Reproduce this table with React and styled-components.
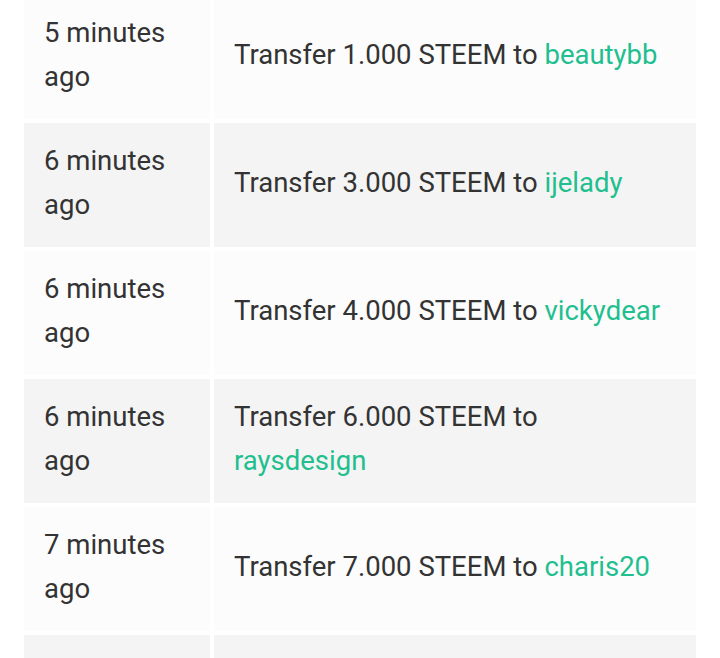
import React from 'react';
import styled, { createGlobalStyle } from 'styled-components';

const GlobalStyle = createGlobalStyle`
  html, body {
    margin: 0;
    padding: 0;
    background: #ffffff;
  }
  body {
    font-family: Roboto, "Liberation Sans", sans-serif;
    color: #333333;
  }
`;

const Page = styled.div`
  padding: 0 20px;
  margin-top: -9px;
  height: 667px;
  overflow: hidden;
`;

const Table = styled.table`
  width: 100%;
  border-collapse: separate;
  border-spacing: 4px;
  table-layout: fixed;
`;

const Row = styled.tr`
  background: ${p => (p.$odd ? '#f4f4f4' : '#fcfcfc')};
`;

const Cell = styled.td`
  height: 124px;
  box-sizing: border-box;
  padding: 16px 20px 20px;
  font-size: 27.5px;
  line-height: 44px;
  color: #333333;
  vertical-align: middle;
  width: ${p => (p.$time ? '186px' : 'auto')};
`;

const UserLink = styled.a`
  color: #1fbf8f;
  text-decoration: none;
`;

const transfers = [
  { when: '5 minutes ago', amount: '1.000', to: 'beautybb' },
  { when: '6 minutes ago', amount: '3.000', to: 'ijelady' },
  { when: '6 minutes ago', amount: '4.000', to: 'vickydear' },
  { when: '6 minutes ago', amount: '6.000', to: 'raysdesign' },
  { when: '7 minutes ago', amount: '7.000', to: 'charis20' },
  { when: '7 minutes ago', amount: '2.000', to: 'steemit' },
];

export default function App() {
  return (
    <>
      <GlobalStyle />
      <Page>
        <Table>
          <tbody>
            {transfers.map((t, i) => (
              <Row key={i} $odd={i % 2 === 1}>
                <Cell $time>{t.when}</Cell>
                <Cell>
                  Transfer {t.amount} STEEM to <UserLink href="#">{t.to}</UserLink>
                </Cell>
              </Row>
            ))}
          </tbody>
        </Table>
      </Page>
    </>
  );
}
